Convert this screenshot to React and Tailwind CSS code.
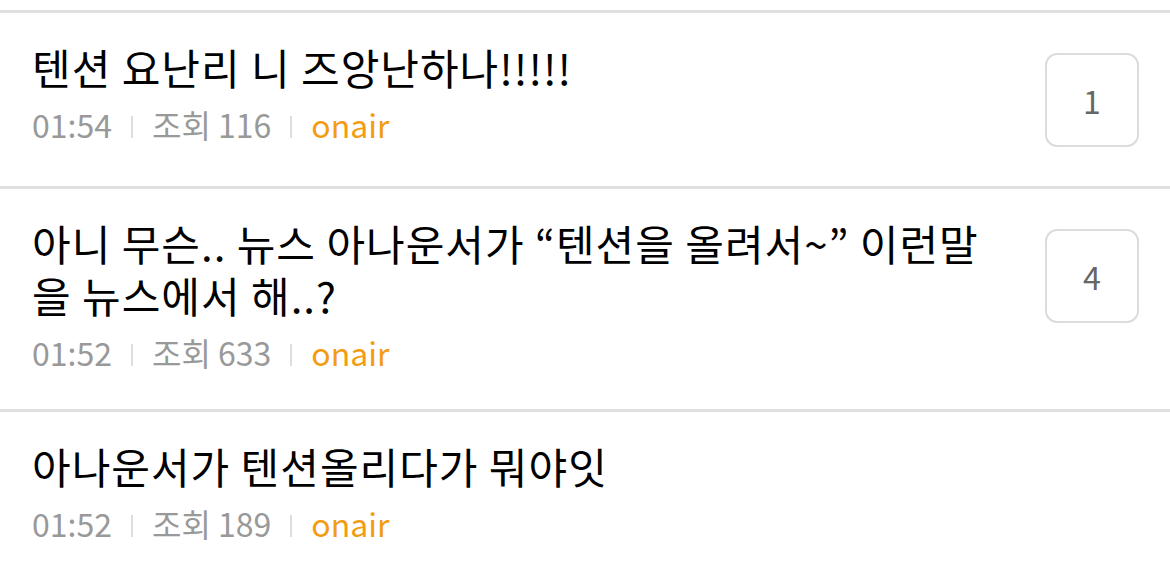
import React from 'react'

const posts = [
  { title: '텐션 요난리 니 즈앙난하나!!!!!', time: '01:54', views: 116, author: 'onair', comments: 1 },
  { title: '아니 무슨.. 뉴스 아나운서가 “텐션을 올려서~” 이런말을 뉴스에서 해..?', time: '01:52', views: 633, author: 'onair', comments: 4 },
  { title: '아나운서가 텐션올리다가 뭐야잇', time: '01:52', views: 189, author: 'onair', comments: null },
]

// thin divider between meta items
const Bar = () => <span className="mx-[19px] mt-[6px] inline-block h-[22px] w-[2px] bg-[#dddddd]" />

const PostRow = ({ post }) => {
  return (
    <li className="flex items-start border-b-[3px] border-[#e0e0e0] pl-8 pr-[31px] pt-[28px] pb-[39px]">
      <div className="min-w-0 flex-1 pr-[56px]">
        <p className="text-[42px] leading-[52px] tracking-[1px] text-black">{post.title}</p>
        <div className="mt-[13px] flex items-center text-[32px] leading-[36px] text-[#999999]">
          <span>{post.time}</span>
          <Bar />
          <span>조회 {post.views}</span>
          <Bar />
          <span className="text-[#f39c12]">{post.author}</span>
        </div>
      </div>
      {post.comments != null && (
        <div className="mt-[12px] flex h-[94px] w-[94px] shrink-0 items-center justify-center rounded-[12px] border-2 border-[#dddddd] text-[32px] text-[#666666]">
          {post.comments}
        </div>
      )}
    </li>
  )
}

export default function App() {
  return (
    <div className="h-[566px] w-[1170px] overflow-hidden bg-white pt-[10px]" style={{ fontFamily: '"Noto Sans CJK KR", "Noto Sans", sans-serif' }}>
      <ul className="border-t-[3px] border-[#e0e0e0]">
        {posts.map((post, i) => (
          <PostRow key={i} post={post} />
        ))}
      </ul>
    </div>
  )
}
